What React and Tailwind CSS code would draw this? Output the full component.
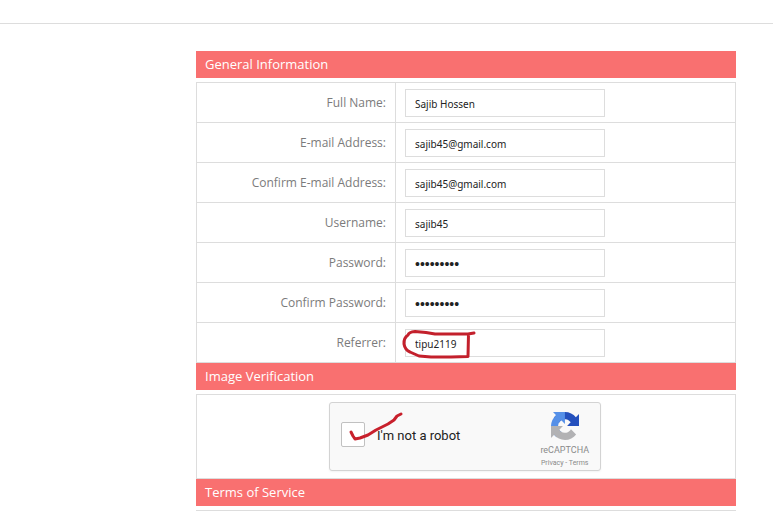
const FIELDS = [
  { id: 'full-name', label: 'Full Name:', type: 'text', value: 'Sajib Hossen' },
  { id: 'email', label: 'E-mail Address:', type: 'text', value: 'sajib45@gmail.com' },
  { id: 'confirm-email', label: 'Confirm E-mail Address:', type: 'text', value: 'sajib45@gmail.com' },
  { id: 'username', label: 'Username:', type: 'text', value: 'sajib45' },
  { id: 'password', label: 'Password:', type: 'password', value: 'sajib4545' },
  { id: 'confirm-password', label: 'Confirm Password:', type: 'password', value: 'sajib4545' },
  { id: 'referrer', label: 'Referrer:', type: 'text', value: 'tipu2119', circled: true },
];

function SectionTitle({ children }) {
  return (
    <h2 className="mb-1 px-[9px] bg-[#f97070] text-white text-[13px] leading-[27px]">
      {children}
    </h2>
  );
}

function Circle() {
  return (
    <svg
      className="absolute -left-1 -top-1 pointer-events-none"
      width="76"
      height="34"
      viewBox="0 0 76 34"
      fill="none"
      stroke="#c3202c"
      strokeLinecap="round"
      strokeLinejoin="round"
    >
      <path
        d="M73 8 L67 9 L50 9 L34 9 L25 7.500 L14 6.500 Q8 7 7 10 Q2.500 13 3 19 Q4 25 9 27 L18 31 L30 32 H50 L67 31.500 L67.500 9"
        strokeWidth="3"
      />
    </svg>
  );
}

function Tick() {
  return (
    <svg
      className="absolute left-1 -top-3 pointer-events-none"
      width="60"
      height="36"
      viewBox="0 0 60 36"
      fill="none"
      stroke="#c8202c"
      strokeWidth="3"
      strokeLinecap="round"
      strokeLinejoin="round"
    >
      <path d="M6 22 L8 26 L10 29 L15 28 L23 25 L31 20 L37 17 L43 14 L49 10 L52 6 L56 4" />
    </svg>
  );
}

function RecaptchaLogo() {
  return (
    <svg width="28" height="28" viewBox="0 0 64 64" aria-hidden="true">
      <path
        fill="#2450bd"
        d="M64 31.955l-.033-1.370V4.687l-7.160 7.160C50.948 4.674 42.033.093 32.050.093c-10.400 0-19.622 4.960-25.458 12.640l11.736 11.860a15.550 15.550 0 0 1 4.754-5.334c2.050-1.600 4.952-2.906 8.968-2.906.485 0 .860.057 1.135.163 4.976.393 9.288 3.140 11.828 7.124l-8.307 8.307L64 31.953"
      />
      <path
        fill="#5590e8"
        d="M31.862.094l-1.370.033H4.594l7.160 7.160C4.580 13.147 0 22.060 0 32.046c0 10.400 4.960 19.622 12.640 25.458L24.500 45.768a15.550 15.550 0 0 1-5.334-4.754c-1.600-2.050-2.906-4.952-2.906-8.968 0-.485.057-.860.163-1.135.393-4.976 3.140-9.288 7.124-11.828l8.307 8.307L31.860.095"
      />
      <path
        fill="#b2b2b4"
        d="M.001 32.045l.033 1.370v25.898l7.160-7.160c5.860 7.173 14.774 11.754 24.760 11.754 10.400 0 19.622-4.960 25.458-12.640l-11.736-11.860a15.550 15.550 0 0 1-4.754 5.334c-2.050 1.600-4.952 2.906-8.968 2.906-.485 0-.860-.057-1.135-.163-4.976-.393-9.288-3.140-11.828-7.124l8.307-8.307c-10.522.040-22.400.066-27.295-.005"
      />
    </svg>
  );
}

function FieldRow({ field }) {
  return (
    <div className="flex h-10 border-b border-[#dddddd]">
      <label
        htmlFor={field.id}
        className="w-[199px] shrink-0 border-r border-[#dddddd] pr-[9px] text-right text-xs leading-[39px] text-[#7b7b7b]"
      >
        {field.label}
      </label>
      <div className="flex flex-1 items-center pl-[9px]">
        <div className="relative">
          <input
            id={field.id}
            type={field.type}
            defaultValue={field.value}
            className={`block w-[200px] h-7 px-[9px] pt-0.5 border border-[#dddddd] bg-white text-[#222222] outline-none ${
              field.type === 'password'
                ? "text-sm font-['Liberation_Sans',sans-serif]"
                : "text-[10px] font-['Noto_Sans',sans-serif]"
            }`}
          />
          {field.circled && <Circle />}
        </div>
      </div>
    </div>
  );
}

function Recaptcha() {
  return (
    <div className="flex w-[272px] h-[69px] rounded-[3px] border border-[#d3d3d3] bg-[#f9f9f9] px-[11px] shadow-xs font-[Roboto,sans-serif]">
      <div className="pt-[19px]">
        <div className="relative">
          <input
            id="robot"
            type="checkbox"
            className="block appearance-none w-6 h-[25px] rounded-xs border border-[#c1c1c1] bg-white"
          />
          <Tick />
        </div>
      </div>
      <label htmlFor="robot" className="flex-1 pl-3 text-[13px] leading-[65px] text-[#222222]">
        I'm not a robot
      </label>
      <div className="flex flex-col items-center pt-[9px] text-[#8a8a8a]">
        <RecaptchaLogo />
        <span className="mt-0.5 text-[9px] leading-4">reCAPTCHA</span>
        <span className="text-[7px] leading-[10px]">
          <a href="#privacy">Privacy</a> - <a href="#terms">Terms</a>
        </span>
      </div>
    </div>
  );
}

export default function App() {
  return (
    <div className="bg-white font-['Open_Sans',sans-serif]">
      <header className="h-6 border-b border-[#dddddd]" />
      <form className="pl-[196px] pr-[37px] pt-[27px]">
        <section>
          <SectionTitle>General Information</SectionTitle>
          <div className="border border-b-0 border-[#dddddd]">
            {FIELDS.map((field) => (
              <FieldRow key={field.id} field={field} />
            ))}
          </div>
        </section>
        <section>
          <SectionTitle>Image Verification</SectionTitle>
          <div className="flex justify-center border border-[#dddddd] pt-[7px] pb-[7px] pr-0.5">
            <Recaptcha />
          </div>
        </section>
        <section>
          <SectionTitle>Terms of Service</SectionTitle>
          <div className="border border-b-0 border-[#dddddd]" />
        </section>
      </form>
    </div>
  );
}
